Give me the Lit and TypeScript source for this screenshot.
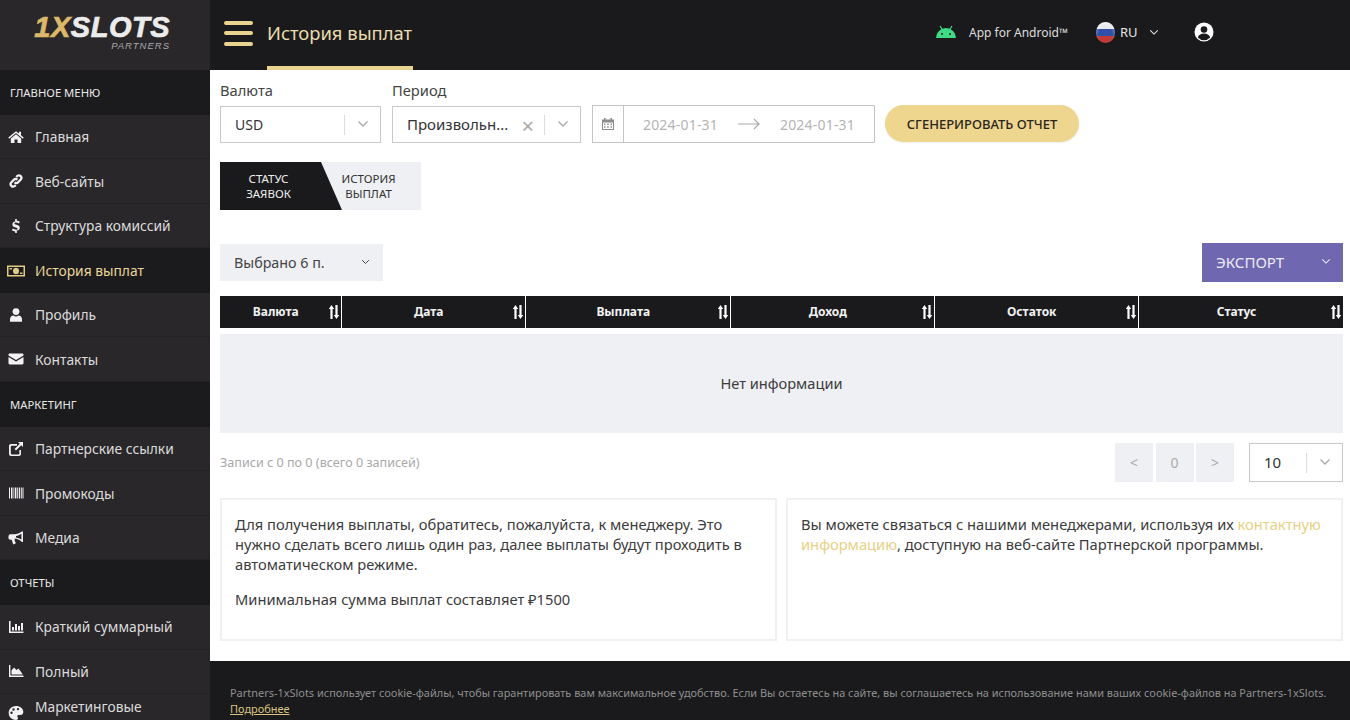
import { LitElement, html, css, svg } from "lit";
import { customElement } from "lit/decorators.js";

const I = (b: unknown, vb = "0 0 16 16", w = 16) => html`<svg class="ic" viewBox=${vb} width=${w} height="16" fill="currentColor">${b}</svg>`;
const icons: Record<string, unknown> = {
  home: I(svg`<path d="M8 2.2 .3 8.6l.9 1.1L8 4l6.8 5.7.9-1.1L13 6.3V2.8h-2v1.8zM8 5.2 2.8 9.5V14h3.700v-3.400h3V14h3.700V9.500z"/>`),
  link: I(svg`<g fill="none" stroke="currentColor" stroke-width="2.200"><path d="M6.600 9.400a2.400 2.400 0 0 0 3.400 0l3-3a2.600 2.600 0 0 0-3.600-3.600L8.200 4"/><path d="M9.400 6.600a2.400 2.400 0 0 0-3.400 0l-3 3a2.600 2.600 0 0 0 3.600 3.600L7.800 12"/></g>`),
  dollar: I(svg`<path d="M7.200 1h1.600v1.700c1.300.1 2.300.5 3 1l-.8 1.700c-.9-.6-1.900-.9-3-.9-1 0-1.500.4-1.500.9 0 .6.6.9 2 1.300 2 .6 3.300 1.300 3.300 3 0 1.500-1.100 2.600-3 2.800V15H7.200v-1.500c-1.400-.1-2.500-.6-3.300-1.200l.9-1.700c1 .7 2.100 1.100 3.200 1.100 1 0 1.600-.4 1.600-1 0-.6-.6-.9-2-1.300-2-.6-3.200-1.400-3.200-3 0-1.500 1.100-2.500 2.800-2.800z"/>`),
  money: I(svg`<path fill-rule="evenodd" d="M0 2.500h18v11H0zM1.500 4v8h15V4z"/><ellipse cx="9" cy="8" rx="3" ry="3.200"/><path d="M2.500 5h2.500v1.500H2.500zM13 9.500h2.500V11H13z"/>`, "0 0 18 16", 18),
  user: I(svg`<circle cx="8" cy="4.600" r="3.400"/><path d="M2 14.800v-2.300c0-2.500 1.700-4 3.500-4 .8.600 1.600.9 2.500.9s1.700-.3 2.500-.9c1.800 0 3.500 1.500 3.500 4v2.300z"/>`),
  mail: I(svg`<path d="M.5 3.800c0-.7.500-1.200 1.200-1.200h12.600c.7 0 1.200.500 1.200 1.200v.6L8 9 .5 4.400zM.5 5.900 8 10.500l7.500-4.600v6.300c0 .7-.5 1.200-1.200 1.200H1.700c-.7 0-1.200-.5-1.200-1.200z"/>`),
  ext: I(svg`<path fill-rule="evenodd" d="M3 3h6v1.800H3.600c-.5 0-.8.300-.8.800v7c0 .5.300.8.800.8h7c.5 0 .8-.3.800-.8V9H13v4c0 1.100-.9 2-2 2H3c-1.100 0-2-.9-2-2V5c0-1.100.9-2 2-2z"/><path d="M10 1h5v5l-1.800-1.800L8 9.400 6.600 8l5.200-5.200z"/>`),
  barcode: I(svg`<path d="M1 2.500h1v11H1zM3 2.500h1.500v11H3zM5.500 2.500h.8v11h-.8zM7 2.500h1.400v11H7zM9.200 2.500h.8v11h-.8zM10.800 2.500h1.400v11h-1.400zM13 2.500h.8v11H13zM14.500 2.500h1v11h-1z"/>`),
  horn: I(svg`<path fill-rule="evenodd" d="M15 1.500v10.500h-1l-.6-.5C11.500 9.800 9 8.800 6.700 8.600v2.700l1 .9-.2 1.400-2.300.9-1.500-4.800H2.500A2 2 0 0 1 .5 7.300V6.200A2 2 0 0 1 2.500 4.200h3.800C9 4.200 11.500 3.300 13.600 1.500zM13.400 3.700C11.600 5 9.800 5.600 8 5.900v1.500c1.800.3 3.600 1 5.400 2.200z"/>`),
  bars: I(svg`<path d="M1 2h1.600v10.500H15.500V14H1zM4 8h2v3.500H4zM7 5h2v6.500H7zM10 7h2v4.500h-2zM13 4h2v7.500h-2z"/>`),
  area: I(svg`<path d="M1 2h1.400v10.600H15.500V14H1zM3.500 11.600V7.500l2.500-3 2.500 2.500 2-1.500 4 5.500v.6z"/>`),
};

const chev = (w = 12) => html`<svg class="chev" viewBox="0 0 12 8" width=${w} height=${w * 0.67} fill="none" stroke="currentColor" stroke-width="1.300"><path d="M1.500 1.500 6 6l4.500-4.500"/></svg>`;
const sort = html`<svg class="sort" viewBox="0 0 12 16" width="12" height="16" fill="#fff"><path d="M3.500 1 6.200 5H4.600v10H2.400V5H.8zM8.500 15 5.800 11h1.600V1h2.200v10h1.600z"/></svg>`;
const palette = html`<svg class="ic" viewBox="0 0 16 16" width="16" height="16" fill="currentColor"><path fill-rule="evenodd" d="M8 1C3.800 1 .7 4 .7 8s3.300 7 7.300 7c1.200 0 2-.7 2-1.700 0-1-.7-1.300-.7-2.100 0-.8.700-1.200 1.500-1.200h1.500c1.800 0 3-1.200 3-3C15.300 3.500 12 1 8 1zM3.500 9a1.200 1.200 0 1 1 0-2.400 1.200 1.200 0 0 1 0 2.400zm2-3.300a1.200 1.200 0 1 1 0-2.400 1.200 1.200 0 0 1 0 2.400zm4.500-.4a1.200 1.200 0 1 1 0-2.400 1.200 1.200 0 0 1 0 2.400z"/></svg>`;

type Row = { t: "h" | "i"; l: string; ic?: string; active?: boolean };
const nav: Row[] = [
  { t: "h", l: "ГЛАВНОЕ МЕНЮ" },
  { t: "i", l: "Главная", ic: "home" },
  { t: "i", l: "Веб-сайты", ic: "link" },
  { t: "i", l: "Структура комиссий", ic: "dollar" },
  { t: "i", l: "История выплат", ic: "money", active: true },
  { t: "i", l: "Профиль", ic: "user" },
  { t: "i", l: "Контакты", ic: "mail" },
  { t: "h", l: "МАРКЕТИНГ" },
  { t: "i", l: "Партнерские ссылки", ic: "ext" },
  { t: "i", l: "Промокоды", ic: "barcode" },
  { t: "i", l: "Медиа", ic: "horn" },
  { t: "h", l: "ОТЧЕТЫ" },
  { t: "i", l: "Краткий суммарный", ic: "bars" },
  { t: "i", l: "Полный", ic: "area" },
];
const cols = [["Валюта", 120.5], ["Дата", 182.5], ["Выплата", 203.5], ["Доход", 202.5], ["Остаток", 202.5], ["Статус", 204]] as const;

@customElement("app-root")
export class AppRoot extends LitElement {
  static styles = css`
    :host { display: grid; grid-template-columns: 210px 1fr; width: 1350px; height: 720px; overflow: hidden; font-family: "Noto Sans", "Open Sans", sans-serif; color: #3a3a3c; background: #fff; }
    * { box-sizing: border-box; }
    .side { background: #29272a; color: #e4e4e4; display: flex; flex-direction: column; height: 720px; overflow: hidden; }
    .logo { height: 70px; flex: none; display: flex; flex-direction: column; align-items: flex-end; padding: 13px 40px 0 0; }
    .logo-main { font: italic 700 29px/28px "Liberation Sans", sans-serif; letter-spacing: .5px; -webkit-text-stroke: .7px currentColor; color: #ececec; }
    .logo-main b { color: #dcb867; }
    .logo-sub { font: italic 400 9.500px/9px "Liberation Sans", sans-serif; letter-spacing: 1px; color: #aaa; }
    .h { height: 44.900px; flex: none; background: #1b1b1d; display: flex; align-items: center; padding-left: 10px; font-size: 11.300px; color: #e8e8e8; }
    .i { height: 44.500px; flex: none; display: flex; align-items: center; font-size: 13.800px; color: #dcdcdc; border-bottom: 1px solid #232124; }
    .i.active { background: #1b1b1d; color: #e9d79a; border-bottom: 0; }
    .i .slot { width: 32px; margin-right: 3px; flex: none; display: flex; justify-content: center; color: #f2f2f2; }
    .i.active .slot { color: #e0cb85; }
    .i.last { height: 26px; align-items: flex-start; padding-top: 3px; border: 0; }
    .i.last .slot { padding-top: 8px; }
    .ic { display: block; }
    .col { display: flex; flex-direction: column; height: 720px; min-width: 0; }
    .top { height: 70px; flex: none; background: #1a1a1c; display: flex; align-items: center; padding-bottom: 6px; color: #e8e8e8; }
    .burger { width: 29px; height: 25px; margin: 2px 14px 0; display: flex; flex-direction: column; justify-content: space-between; }
    .burger i { display: block; height: 4px; border-radius: 2px; background: #e9d48f; }
    .title { height: 70px; width: 146px; flex: none; margin-bottom: -6px; font-size: 18.400px; line-height: 66px; color: #e9dcae; border-bottom: 4px solid #e9d48f; white-space: nowrap; }
    .android { display: flex; align-items: center; margin-left: 522px; font-size: 12px; width: 161px; color: #dedede; }
    .android svg { margin-right: 12px; flex: none; }
    .lang { display: flex; align-items: center; font-size: 13px; width: 98px; color: #e6e6e6; }
    .flag { width: 19px; height: 21px; border-radius: 50%; margin-right: 5px; background: linear-gradient(#e8e8ee 0 34%, #2f4fa8 34% 67%, #c23a33 67%); box-shadow: inset 0 2px 3px #fff8; }
    .lang .chev { margin-left: 11px; color: #e6e6e6; }
    .main { flex: 1; min-height: 0; padding: 12px 7px 0 10px; display: flex; flex-direction: column; }
    .filters { display: flex; align-items: flex-end; height: 61px; flex: none; }
    .f label { display: block; font-size: 14.700px; line-height: 19px; margin-bottom: 6px; color: #444; }
    .sel { height: 37px; border: 1px solid #c9c9c9; display: flex; align-items: center; font-size: 14px; color: #333; background: #fff; padding-left: 14px; }
    .sel .txt { flex: 1; white-space: nowrap; overflow: hidden; padding-bottom: 1px; }
    .sel .txt.wide { font-size: 15px; }
    .sel .x { color: #aaa; font-size: 22px; margin-right: 10px; line-height: 1; }
    .sel .sep { width: 1px; height: 20px; background: #ddd; }
    .sel .ar { width: 35px; display: flex; justify-content: center; color: #aaa; }
    .dates { width: 283px; margin-left: 11px; height: 38px; border: 1px solid #c4c4c4; display: flex; align-items: center; color: #b4b4b4; font-size: 14px; }
    .cal { width: 31px; height: 100%; border-right: 1px solid #c4c4c4; display: flex; align-items: center; justify-content: center; color: #8c8c8c; flex: none; }
    .dates span { width: 113px; text-align: center; letter-spacing: .2px; }
    .dates .arrow { flex: none; color: #aaa; }
    .gen { width: 194px; height: 37px; margin: 0 0 1px 10px; border: 0; border-radius: 19px; background: #eed68f; color: #2a2620; font: 500 13px "Noto Sans", sans-serif; padding: 0; box-shadow: 0 1px 2px #0001; }
    .tabs { display: flex; width: 201px; height: 48px; margin-top: 19px; background: #eff0f3; flex: none; font-size: 11.500px; line-height: 15px; text-align: center; }
    .tab { display: flex; align-items: center; justify-content: center; }
    .tab.on { width: 122px; color: #eee; background: #1a1a1c; clip-path: polygon(0 0, 101px 0, 100% 100%, 0 100%); padding-right: 25px; }
    .tab.off { width: 79px; color: #333; padding-right: 26px; }
    .bar { display: flex; justify-content: space-between; align-items: center; margin-top: 33px; height: 39px; flex: none; }
    .picked { width: 163px; height: 37px; background: #eff0f4; display: flex; align-items: center; justify-content: space-between; padding: 0 13px 0 14px; font-size: 14.300px; color: #444; }
    .export { width: 141px; height: 39px; background: #6f68b0; color: #eceaf6; display: flex; align-items: center; justify-content: space-between; padding: 0 12px 2px 14px; font-size: 15px; }
    .thead { display: flex; margin-top: 14px; height: 32px; flex: none; }
    .th { background: #1a1a1c; color: #f2f2f2; font-size: 12px; font-weight: 700; display: flex; align-items: center; justify-content: center; position: relative; margin-right: 1.500px; padding: 0 9px 2px 0; }
    .th:last-child { margin-right: 0; }
    .th .sort { position: absolute; right: 1px; top: 8px; }
    .empty { height: 99px; margin-top: 6px; background: #eff0f4; display: flex; align-items: center; justify-content: center; padding-bottom: 1px; font-size: 14.600px; color: #3c3c3c; flex: none; }
    .pager { display: flex; align-items: center; margin-top: 10px; height: 39px; flex: none; }
    .info { flex: 1; font-size: 12.600px; color: #a9a9a9; }
    .pg { width: 38px; height: 39px; background: #eff0f3; color: #aaa; display: flex; align-items: center; justify-content: center; font-size: 14px; margin-left: 2.500px; }
    .size { width: 94px; height: 39px; margin-left: 15px; padding-left: 14px; }
    .size .txt { font-size: 15px; }
    .cards { display: flex; gap: 9px; margin-top: 16px; flex: none; }
    .card { flex: 1; height: 143px; border: 2px solid #f0f0f2; padding: 14px 13px; font-size: 14.700px; line-height: 20px; color: #3c3c3c; }
    .card p { margin: 0 0 15px; }
    .card a { color: #e8d184; }
    .foot { height: 59px; flex: none; background: #1a1a1c; padding: 24px 10px 0 20px; font-size: 10.950px; line-height: 15.500px; color: #8f8f8f; white-space: nowrap; }
    .foot a { color: #d8c37f; text-decoration: underline; display: block; }
  `;

  render() {
    return html`
      <aside class="side">
        <div class="logo">
          <div class="logo-main"><b>1X</b>SLOTS</div>
          <div class="logo-sub">PARTNERS</div>
        </div>
        ${nav.map((r) => r.t === "h"
          ? html`<div class="h">${r.l}</div>`
          : html`<div class="i ${r.active ? "active" : ""}"><span class="slot">${icons[r.ic!]}</span>${r.l}</div>`)}
        <div class="i last"><span class="slot">${palette}</span>Маркетинговые</div>
      </aside>
      <div class="col">
        <header class="top">
          <div class="burger"><i></i><i></i><i></i></div>
          <div class="title">История выплат</div>
          <div class="android">
            <svg viewBox="0 0 22 14" width="22" height="14" fill="#3ddc84"><path d="M1 13a10 10 0 0 1 20 0z"/><path d="M5 1l2.500 4M17 1l-2.500 4" stroke="#3ddc84" stroke-width="1.200"/><circle cx="7" cy="9" r="1" fill="#1a1a1c"/><circle cx="15" cy="9" r="1" fill="#1a1a1c"/></svg>
            App for Android™
          </div>
          <div class="lang"><span class="flag"></span>RU${chev(10)}</div>
          <svg viewBox="0 0 20 20" width="20" height="20"><circle cx="10" cy="10" r="9.500" fill="#fff"/><circle cx="10" cy="7.500" r="3.300" fill="#1a1a1c"/><path d="M3.800 15.500c1-3 3.500-4 6.200-4s5.200 1 6.200 4a8.500 8.500 0 0 1-12.400 0z" fill="#1a1a1c"/></svg>
        </header>
        <main class="main">
          <div class="filters">
            <div class="f"><label>Валюта</label><div class="sel" style="width:161px"><span class="txt">USD</span><span class="sep"></span><span class="ar">${chev()}</span></div></div>
            <div class="f" style="margin-left:11px"><label>Период</label><div class="sel" style="width:189px"><span class="txt wide">Произвольн...</span><span class="x">×</span><span class="sep"></span><span class="ar">${chev()}</span></div></div>
            <div class="dates">
              <div class="cal"><svg viewBox="0 0 14 14" width="14" height="14" fill="currentColor"><path fill-rule="evenodd" d="M1 2.500h2V1h1.500v1.500h5V1H11v1.500h2V13H1zM2 5.500V12h10V5.500z"/><path d="M3 6.500h1.500V8H3zM6.200 6.500h1.500V8H6.200zM9.500 6.500H11V8H9.500zM3 9.300h1.500v1.500H3zM6.200 9.300h1.500v1.500H6.200zM9.500 9.300H11v1.500H9.500z"/></svg></div>
              <span>2024-01-31</span>
              <svg class="arrow" viewBox="0 0 24 12" width="24" height="12" fill="none" stroke="currentColor" stroke-width="1.200"><path d="M1 6h21M17 1l5 5-5 5"/></svg>
              <span>2024-01-31</span>
            </div>
            <button class="gen">СГЕНЕРИРОВАТЬ ОТЧЕТ</button>
          </div>
          <div class="tabs">
            <div class="tab on">СТАТУС<br />ЗАЯВОК</div>
            <div class="tab off">ИСТОРИЯ<br />ВЫПЛАТ</div>
          </div>
          <div class="bar">
            <div class="picked">Выбрано 6 п. ${chev(9)}</div>
            <div class="export">ЭКСПОРТ ${chev(10)}</div>
          </div>
          <div class="thead">
            ${cols.map(([n, w]) => html`<div class="th" style="width:${w}px">${n}${sort}</div>`)}
          </div>
          <div class="empty">Нет информации</div>
          <div class="pager">
            <div class="info">Записи с 0 по 0 (всего 0 записей)</div>
            <div class="pg">&lt;</div><div class="pg">0</div><div class="pg">&gt;</div>
            <div class="sel size"><span class="txt">10</span><span class="sep"></span><span class="ar">${chev()}</span></div>
          </div>
          <div class="cards">
            <div class="card">
              <p>Для получения выплаты, обратитесь, пожалуйста, к менеджеру. Это нужно сделать всего лишь один раз, далее выплаты будут проходить в автоматическом режиме.</p>
              <p>Минимальная сумма выплат составляет ₽1500</p>
            </div>
            <div class="card">Вы можете связаться с нашими менеджерами, используя их <a>контактную информацию</a>, доступную на веб-сайте Партнерской программы.</div>
          </div>
        </main>
        <footer class="foot">Partners-1xSlots использует cookie-файлы, чтобы гарантировать вам максимальное удобство. Если Вы остаетесь на сайте, вы соглашаетесь на использование нами ваших cookie-файлов на Partners-1xSlots.<a>Подробнее</a></footer>
      </div>
    `;
  }
}
